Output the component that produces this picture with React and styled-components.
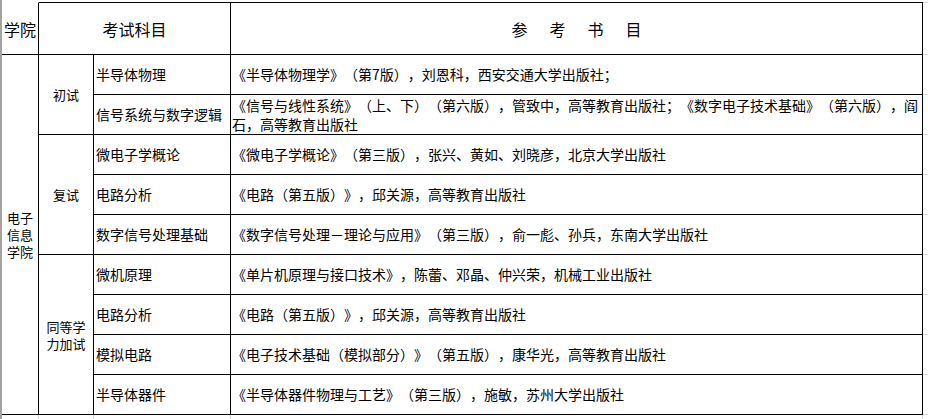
import React from "react";
import styled, { createGlobalStyle } from "styled-components";

const Global = createGlobalStyle`
  html, body { margin: 0; padding: 0; background: #fff; }
  body {
    font-family: "Noto Sans CJK SC", "Noto Sans", sans-serif;
    color: #000;
    overflow: hidden;
    text-spacing-trim: space-all;
    font-kerning: none;
  }
`;

const Sheet = styled.div`
  min-height: 100vh;
  box-sizing: border-box;
  border-left: 2px solid #a3a3a3;
  padding-top: 2px;
`;

const Grid = styled.div`
  display: grid;
  grid-template-columns: 37px 55px 137px 692px 1fr;
  grid-template-rows: 53px repeat(9, 40px) 6px;
`;

const Cell = styled.div`
  box-sizing: border-box;
  display: flex;
  align-items: center;
  justify-content: ${(p) => (p.$align === "left" ? "flex-start" : "center")};
  text-align: ${(p) => (p.$align === "left" ? "left" : "center")};
  border-right: 1px solid #000;
  border-bottom: 1px solid #000;
  padding-left: ${(p) => p.$pad || 0}px;
  font-size: ${(p) => p.$size || 14}px;
  line-height: ${(p) => p.$lh || 19}px;
  white-space: nowrap;
  grid-column: span ${(p) => p.$cols || 1};
  grid-row: span ${(p) => p.$rows || 1};
`;

const HeadCell = styled(Cell)`
  border-top: 1px solid ${(p) => (p.$noTop ? "transparent" : "#000")};
  font-size: 16px;
  line-height: 20px;
`;

const ExtCell = styled.div`
  box-sizing: border-box;
  border-bottom: 1px solid #d6d6d6;
  border-top: ${(p) => (p.$top ? "1px solid #d6d6d6" : "none")};
`;

const TailCell = styled.div`
  box-sizing: border-box;
  border-right: ${(p) => (p.$last ? "none" : "1px solid #d6d6d6")};
`;

const Spaced = styled.span`
  display: inline-flex;
  gap: 22px;
`;

const rows = [
  { subject: "半导体物理", book: ["《半导体物理学》（第7版），刘恩科，西安交通大学出版社；"] },
  {
    subject: "信号系统与数字逻辑",
    book: [
      "《信号与线性系统》（上、下）（第六版），管致中，高等教育出版社；《数字电子技术基础》（第六版），阎",
      "石，高等教育出版社",
    ],
  },
  { subject: "微电子学概论", book: ["《微电子学概论》（第三版），张兴、黄如、刘晓彦，北京大学出版社"] },
  { subject: "电路分析", book: ["《电路（第五版）》，邱关源，高等教育出版社"] },
  { subject: "数字信号处理基础", book: ["《数字信号处理－理论与应用》（第三版），俞一彪、孙兵，东南大学出版社"] },
  { subject: "微机原理", book: ["《单片机原理与接口技术》，陈蕾、邓晶、仲兴荣，机械工业出版社"] },
  { subject: "电路分析", book: ["《电路（第五版）》，邱关源，高等教育出版社"] },
  { subject: "模拟电路", book: ["《电子技术基础（模拟部分）》（第五版），康华光，高等教育出版社"] },
  { subject: "半导体器件", book: ["《半导体器件物理与工艺》（第三版），施敏，苏州大学出版社"] },
];

const groups = {
  0: { label: ["初试"], span: 2 },
  2: { label: ["复试"], span: 3 },
  5: { label: ["同等学", "力加试"], span: 4 },
};

function Lines({ lines }) {
  return lines.map((l, i) => (
    <React.Fragment key={i}>
      {i > 0 && <br />}
      {l}
    </React.Fragment>
  ));
}

export default function App() {
  return (
    <>
      <Global />
      <Sheet>
        <Grid>
          <HeadCell $noTop>学院</HeadCell>
          <HeadCell $cols={2}>考试科目</HeadCell>
          <HeadCell>
            <Spaced>
              <span>参</span>
              <span>考</span>
              <span>书</span>
              <span>目</span>
            </Spaced>
          </HeadCell>
          <ExtCell $top />
          {rows.map((r, i) => (
            <React.Fragment key={i}>
              {i === 0 && (
                <Cell $rows={9} $size={13} $lh={17}>
                  <span>
                    <Lines lines={["电子", "信息", "学院"]} />
                  </span>
                </Cell>
              )}
              {groups[i] && (
                <Cell $rows={groups[i].span} $size={13} $lh={17}>
                  <span>
                    <Lines lines={groups[i].label} />
                  </span>
                </Cell>
              )}
              <Cell $align="left" $pad={2}>
                {r.subject}
              </Cell>
              <Cell $align="left" $pad={1}>
                <span>
                  <Lines lines={r.book} />
                </span>
              </Cell>
              <ExtCell />
            </React.Fragment>
          ))}
          <TailCell />
          <TailCell />
          <TailCell />
          <TailCell />
          <TailCell $last />
        </Grid>
      </Sheet>
    </>
  );
}
